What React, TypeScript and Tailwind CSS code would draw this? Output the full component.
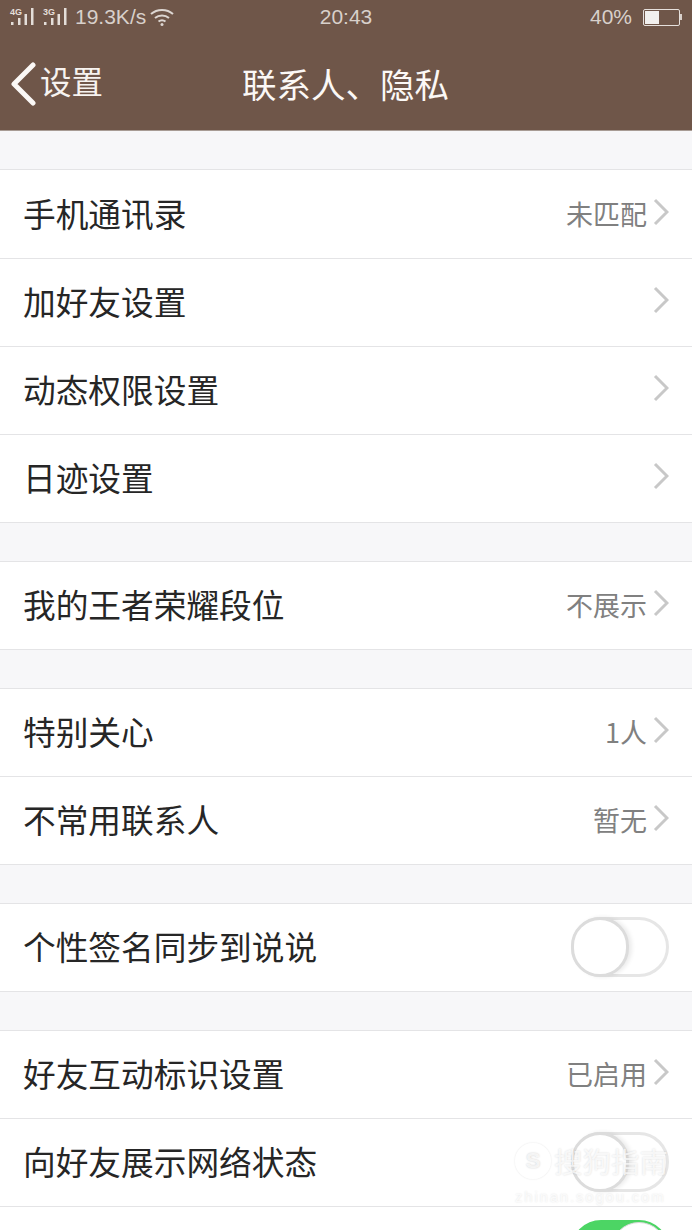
const font = { fontFamily: '"Noto Sans CJK SC", "Liberation Sans", sans-serif' };

type Row = {
  label: string;
  value?: string;
  toggle?: "on" | "off";
};

const groups: Row[][] = [
  [
    { label: "手机通讯录", value: "未匹配" },
    { label: "加好友设置" },
    { label: "动态权限设置" },
    { label: "日迹设置" },
  ],
  [{ label: "我的王者荣耀段位", value: "不展示" }],
  [
    { label: "特别关心", value: "1人" },
    { label: "不常用联系人", value: "暂无" },
  ],
  [{ label: "个性签名同步到说说", toggle: "off" }],
  [
    { label: "好友互动标识设置", value: "已启用" },
    { label: "向好友展示网络状态", toggle: "off" },
    { label: "", toggle: "on" },
  ],
];

function Toggle({ on }: { on: boolean }) {
  if (on) {
    return (
      <div className="-mt-px flex h-[60px] w-[98px] items-center justify-end rounded-full bg-[#4cd564] p-[2px]">
        <div className="h-[56px] w-[56px] rounded-full border border-[#d8d8d8] bg-white" />
      </div>
    );
  }
  return (
    <div className="-mt-px flex h-[60px] w-[98px] items-center rounded-full border-[3px] border-[#e6e6e6] bg-white">
      <div className="-ml-[3px] h-[60px] w-[58px] rounded-full border-[3px] border-[#dcdcdc] bg-white shadow-[3px_0_4px_rgba(0,0,0,0.08)]" />
    </div>
  );
}

function Signal({ tag }: { tag: string }) {
  return (
    <span className="relative -mt-[2px] inline-block h-[18px] w-[28px]">
      <span className="absolute left-0 top-0 text-[9px] font-bold leading-[10px] text-[#e4ded9]">{tag}</span>
      <svg width="28" height="18" viewBox="0 0 28 18" className="absolute left-0 top-0" fill="#e4ded9">
        <rect x="1" y="15" width="2.500" height="3" />
        <rect x="8" y="11" width="2.500" height="7" />
        <rect x="14.500" y="7" width="2.500" height="11" />
        <rect x="21" y="1" width="2.500" height="17" />
      </svg>
    </span>
  );
}

function StatusBar() {
  return (
    <div className="flex h-[36px] items-center justify-between pb-[2px] pl-[10px] pr-[10px] text-[21px] text-[#d8d0cb] [font-family:'Liberation_Sans']">
      <div className="flex w-[240px] items-center">
        <Signal tag="4G" />
        <span className="w-[5px]" />
        <Signal tag="3G" />
        <span className="mb-px ml-[4px] leading-none">19.3K/s</span>
        <svg width="24" height="18" viewBox="0 0 24 18" fill="none" stroke="#ddd6d2" strokeWidth="2" className="ml-[4px]">
          <path d="M1 6c6-5.500 16-5.500 22 0" />
          <path d="M5 10c4-3.500 10-3.500 14 0" />
          <path d="M8.500 13.500c2-1.500 5-1.500 7 0" />
          <circle cx="12" cy="16.500" r="1.500" fill="#ddd6d2" stroke="none" />
        </svg>
      </div>
      <span className="mb-px leading-none">20:43</span>
      <div className="flex w-[240px] items-center justify-end">
        <span className="mb-px mr-[11px] leading-none">40%</span>
        <div className="flex h-[17px] w-[37px] items-center rounded-[2px] border border-[#e6e0dc] p-[1px]">
          <div className="h-full w-[14px] bg-[#f2f0ee]" />
        </div>
        <div className="h-[6px] w-[2px] bg-[#d8d0cb]" />
      </div>
    </div>
  );
}

export default function App() {
  return (
    <div className="relative h-[1230px] w-[692px] overflow-hidden bg-[#f7f7f9]" style={font}>
      <header className="h-[131px] border-b border-[#a89c95] bg-[#6f5649]">
        <StatusBar />
        <div className="relative flex h-[94px] items-center justify-center">
          <div className="absolute left-[10px] top-[26px] flex items-center">
            <svg width="27" height="44" viewBox="0 0 27 44" fill="none" stroke="#fbf8f6" strokeWidth="5" strokeLinecap="round" strokeLinejoin="round">
              <path d="M23 3 4 22l19 19" />
            </svg>
            <span className="-mt-[6px] ml-[3px] text-[31.500px] leading-none text-[#f7f3f0]">设置</span>
          </div>
          <h1 className="-ml-px text-[34.500px] font-normal leading-none text-[#fbf8f6]">联系人、隐私</h1>
        </div>
      </header>

      <main className="flex flex-col gap-[38px] pt-[38px]">
        {groups.map((group, i) => (
          <section key={i} className="border-t border-[#e4e4e6] bg-white first:pt-px">
            {group.map((row) => (
              <div
                key={row.label || "last"}
                className="flex h-[88px] items-center justify-between border-b border-[#e4e4e6] pl-[23px] pr-[23px]"
              >
                <span className="mb-[2px] text-[32.700px] leading-none text-[#262626]">{row.label}</span>
                {row.toggle ? (
                  <Toggle on={row.toggle === "on"} />
                ) : (
                  <div className="mb-[3px] flex items-center">
                    {row.value && <span className="text-[27px] leading-none text-[#808080]">{row.value}</span>}
                    <svg width="16" height="28" viewBox="0 0 16 28" fill="none" stroke="#c8c8c8" strokeWidth="3" className="-mt-[2px] ml-[6px]">
                      <path d="M2 2l12 12L2 26" />
                    </svg>
                  </div>
                )}
              </div>
            ))}
          </section>
        ))}
      </main>

      {/* watermark */}
      <div className="pointer-events-none absolute left-[515px] top-[1143px] flex w-[160px] flex-col items-start text-white/75">
        <div className="flex items-center">
          <span className="flex h-[36px] w-[36px] items-center justify-center rounded-full border-[3px] border-white/80 text-[22px] font-bold leading-none shadow-[0_0_2px_rgba(0,0,0,0.12)] [font-family:'Liberation_Sans'] [text-shadow:0_0_2px_rgba(0,0,0,0.2)]">
            S
          </span>
          <span className="ml-[3px] text-[28.500px] leading-none [text-shadow:0_0_2px_rgba(0,0,0,0.15)]">搜狗指南</span>
        </div>
        <span className="mt-[10px] text-[15px] leading-none tracking-[1.800px] [font-family:'Liberation_Sans'] [text-shadow:0_0_2px_rgba(0,0,0,0.12)]">zhinan.sogou.com</span>
      </div>
    </div>
  );
}
